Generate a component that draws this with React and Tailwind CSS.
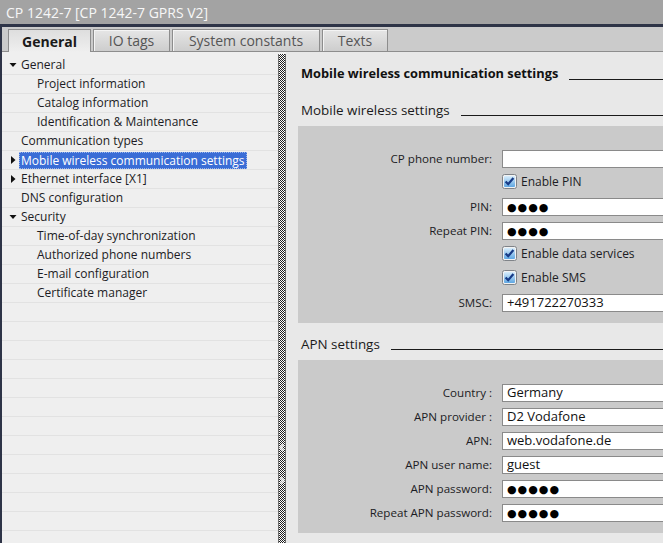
import { Fragment } from 'react';

const FONT = "font-['Open_Sans','DejaVu_Sans',sans-serif]";

const tree = [
  { t: 'General', lvl: 1, arrow: 'down' },
  { t: 'Project information', lvl: 2 },
  { t: 'Catalog information', lvl: 2 },
  { t: 'Identification & Maintenance', lvl: 2 },
  { t: 'Communication types', lvl: 1 },
  { t: 'Mobile wireless communication settings', lvl: 1, arrow: 'right', sel: true },
  { t: 'Ethernet interface [X1]', lvl: 1, arrow: 'right' },
  { t: 'DNS configuration', lvl: 1 },
  { t: 'Security', lvl: 1, arrow: 'down' },
  { t: 'Time-of-day synchronization', lvl: 2 },
  { t: 'Authorized phone numbers', lvl: 2 },
  { t: 'E-mail configuration', lvl: 2 },
  { t: 'Certificate manager', lvl: 2 },
];

function Arrow({ dir }) {
  if (dir === 'down') {
    return (
      <svg width="8" height="8" viewBox="0 0 8 8" className="shrink-0">
        <path d="M0.5 2 L7.5 2 L4 6 Z" fill="#111" />
      </svg>
    );
  }
  return (
    <svg width="8" height="10" viewBox="0 0 8 10" className="shrink-0">
      <path d="M2 1 L6.5 5 L2 9 Z" fill="#111" />
    </svg>
  );
}

function TreeRow({ item }) {
  return (
    <div className="flex h-[19px] shrink-0 items-center border-b border-[#e2e2e2]">
      <div className="flex w-[19px] shrink-0 justify-center pl-[3px]">
        {item.arrow && <Arrow dir={item.arrow} />}
      </div>
      {item.lvl === 2 && <div className="w-[16px] shrink-0" />}
      {item.sel ? (
        <span className="-ml-[2px] whitespace-nowrap border border-dotted border-[#9bb6ea] bg-[#3a6dd6] px-[1px] leading-[15px] text-white">
          {item.t}
        </span>
      ) : (
        <span className="whitespace-nowrap text-[#1c1c24]">{item.t}</span>
      )}
    </div>
  );
}

function Tab({ label, w, active }) {
  if (active) {
    return (
      <div
        className={`relative -mb-px flex h-[23px] items-center justify-center border border-b-0 border-[#8d8d8d] bg-gradient-to-b from-[#dedede] to-[#efefef] text-[14px] font-bold text-[#1a1a1a] ${w}`}
      >
        {label}
      </div>
    );
  }
  return (
    <div
      className={`flex h-[22px] items-center justify-center border border-b-0 border-[#8d8d8d] bg-gradient-to-b from-[#e6e6e6] to-[#cdcdcd] text-[14px] text-[#555] shadow-[inset_1px_1px_0_#f4f4f4] ${w}`}
    >
      {label}
    </div>
  );
}

function Check() {
  return (
    <svg width="15" height="15" viewBox="0 0 15 15" className="shrink-0">
      <defs>
        <linearGradient id="cb" x1="0" y1="0" x2="0" y2="1">
          <stop offset="0" stopColor="#d9eefc" />
          <stop offset="1" stopColor="#5ea6e2" />
        </linearGradient>
      </defs>
      <rect x="0.5" y="0.5" width="14" height="14" rx="2" fill="#f2f2f2" stroke="#7f8388" />
      <rect x="2" y="2" width="11" height="11" rx="1" fill="url(#cb)" />
      <path d="M3.6 7.4 L6.2 10.2 L11.4 4" fill="none" stroke="#163a86" strokeWidth="2.2" />
    </svg>
  );
}

function Field({ label, value, dots }) {
  return (
    <div className="flex h-[24px] shrink-0 items-start">
      <div className="flex h-[18px] w-[194px] shrink-0 items-center justify-end text-[11.6px] text-[#1c1c24]">
        {label}
      </div>
      <div className="ml-[10px] flex h-[18px] w-[220px] shrink-0 items-center border border-[#8a8a8a] bg-white pl-[4px] text-[13px] text-[#111]">
        {dots ? (
          <span className="text-[11px] tracking-[1px] text-black">{'●'.repeat(dots)}</span>
        ) : (
          value
        )}
      </div>
    </div>
  );
}

function CheckRow({ label }) {
  return (
    <div className="flex h-[24px] shrink-0 items-start">
      <div className="ml-[204px] flex h-[15px] items-center gap-[4px] text-[12px] text-[#1c1c24]">
        <Check />
        <span>{label}</span>
      </div>
    </div>
  );
}

function Heading({ children, bold }) {
  return (
    <div className="flex h-[20px] shrink-0 items-center pl-[15px]">
      <span className={bold ? 'text-[12.8px] font-bold text-[#111]' : 'text-[13.4px] text-[#1a1a1a]'}>{children}</span>
      <div className="ml-[11px] mt-[11px] h-px flex-1 bg-[#1a1a1a]" />
    </div>
  );
}

export default function App() {
  const blanks = Array.from({ length: 14 });
  return (
    <div className={`flex h-[543px] w-[663px] flex-col overflow-hidden bg-[#e8e8e8] ${FONT}`}>
      <div className="flex h-[24px] shrink-0 items-center bg-[#a3a3a3] px-[6px] text-[14px] text-[#f7f7f7]">
        CP 1242-7 [CP 1242-7 GPRS V2]
      </div>
      <div className="h-[3px] shrink-0 bg-[#2e3447]" />
      <div className="flex min-h-0 flex-1 flex-col border-l-2 border-[#2e3447]">
        <div className="flex h-[25px] shrink-0 items-end gap-[2px] border-b border-[#8d8d8d] bg-[#cbcbcb] pl-[6px]">
          <Tab label="General" w="w-[83px]" active />
          <Tab label="IO tags" w="w-[77px]" />
          <Tab label="System constants" w="w-[148px]" />
          <Tab label="Texts" w="w-[66px]" />
        </div>
        <div className="flex min-h-0 flex-1 bg-[#efefef]">
          <div className="flex w-[276px] shrink-0 flex-col overflow-hidden pt-[4px] text-[12px]">
            {tree.map((item) => (
              <TreeRow key={item.t} item={item} />
            ))}
            {blanks.map((_, i) => (
              <div key={i} className="h-[19px] shrink-0 border-b border-[#e2e2e2]" />
            ))}
          </div>
          <div className="mt-[2px] flex w-[8px] shrink-0 flex-col items-center border-x border-[#6c6c6c] bg-[repeating-conic-gradient(#1e1e1e_0%_25%,#ffffff_0%_50%)] bg-[length:2px_2px] pt-[390px]">
            <svg width="6" height="7" viewBox="0 0 6 7">
              <path d="M4.5 0.5 L1.5 3.5 L4.5 6.5" fill="none" stroke="#fff" strokeWidth="1.6" />
            </svg>
            <svg width="6" height="7" viewBox="0 0 6 7" className="mt-[26px]">
              <path d="M1.5 0.5 L4.5 3.5 L1.5 6.5" fill="none" stroke="#fff" strokeWidth="1.6" />
            </svg>
          </div>
          <div className="flex min-w-0 flex-1 flex-col overflow-hidden bg-[#e8e8e8] pt-[12px]">
            <Heading bold>Mobile wireless communication settings</Heading>
            <div className="h-[16px] shrink-0" />
            <Heading>Mobile wireless settings</Heading>
            <div className="ml-[12px] mt-[6px] flex w-[420px] shrink-0 flex-col bg-[#cacaca] pb-[5px] pt-[24px]">
              <Field label="CP phone number:" value="" />
              <CheckRow label="Enable PIN" />
              <Field label="PIN:" dots={4} />
              <Field label="Repeat PIN:" dots={4} />
              <CheckRow label="Enable data services" />
              <CheckRow label="Enable SMS" />
              <Field label="SMSC:" value="+491722270333" />
            </div>
            <div className="h-[11px] shrink-0" />
            <Heading>APN settings</Heading>
            <div className="ml-[12px] mt-[6px] flex w-[420px] shrink-0 flex-col bg-[#cacaca] pb-[5px] pt-[24px]">
              <Field label="Country :" value="Germany" />
              <Field label="APN provider :" value="D2 Vodafone" />
              <Field label="APN:" value="web.vodafone.de" />
              <Field label="APN user name:" value="guest" />
              <Field label="APN password:" dots={5} />
              <Field label="Repeat APN password:" dots={5} />
            </div>
          </div>
        </div>
      </div>
    </div>
  );
}
